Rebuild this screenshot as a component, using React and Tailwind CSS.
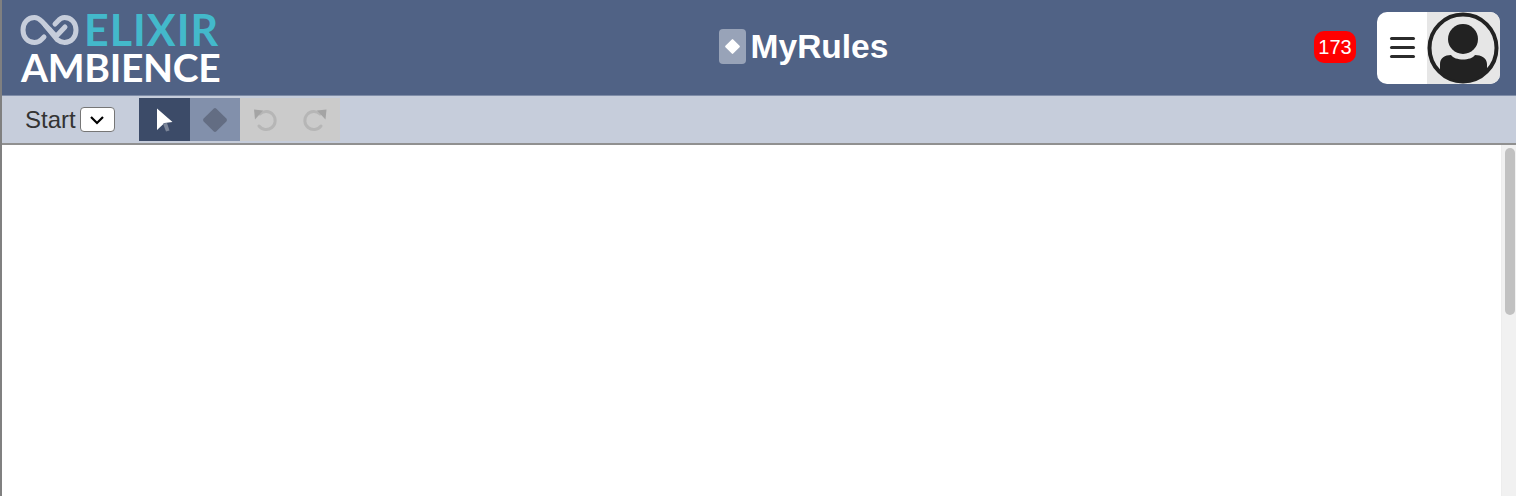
function Logo() {
  return (
    <div className="flex flex-col w-[200px] font-['Lato',sans-serif] font-bold">
      <div className="flex items-center h-[36px]">
        <svg width="62" height="38" viewBox="0 0 62 38" fill="none" className="shrink-0 -ml-[2px]">
          <path
            d="M31 19 L23 10.5 C20.5 8 18 6.5 15.5 6.5 C8.5 6.5 4 12 4 19 C4 26 8.5 31.5 15.5 31.5 C18 31.5 20.5 30.5 22.5 28.5 L25 26"
            stroke="#c6cddb"
            strokeWidth="5"
            strokeLinecap="round"
          />
          <path
            d="M31 19 L37 25.5 L46 16 M36 13 L38.5 10.5 C40.5 8 43 6.5 45.5 6.5 C52.5 6.5 57 12 57 19 C57 26 52.5 31.5 45.5 31.5 C43 31.5 40.5 30.5 38 28.5 L26 14"
            stroke="#c6cddb"
            strokeWidth="5"
            strokeLinecap="round"
            strokeLinejoin="round"
          />
        </svg>
        <span className="text-[#43b9cb] text-[43px] leading-[36px] tracking-[1px] ml-[3px] mt-[1px]">ELIXIR</span>
      </div>
      <span className="text-white text-[39px] leading-[34px] tracking-[-0.3px] mt-[2px]">AMBIENCE</span>
    </div>
  );
}

function Toolbar() {
  return (
    <div className="flex items-center h-[47px] bg-[#c6cddb]">
      <span className="ml-[23px] text-[24px] text-[#333] leading-none">Start</span>
      <button className="flex items-center justify-center ml-[4px] w-[35px] h-[25px] bg-white border border-[#767676] rounded-[4px]">
        <svg width="14" height="10" viewBox="0 0 14 10" fill="none">
          <path d="M1 2 L7 8 L13 2" stroke="#000" strokeWidth="2.2" />
        </svg>
      </button>
      <div className="flex ml-[24px] h-[43px]">
        <div className="flex items-center justify-center w-[51px] bg-[#3c4b68]">
          <svg width="20" height="26" viewBox="0 0 20 26">
            <path d="M3 1.5 L18.5 15 L10.5 16 L3 23 Z" fill="#fff" />
            <path d="M9 16.5 L13 16 L15.5 23.5 L12 24.5 Z" fill="#7c8699" />
          </svg>
        </div>
        <div className="flex items-center justify-center w-[50px] bg-[#8290ab]">
          <div className="w-[18px] h-[18px] rotate-45 rounded-[2px] bg-[#636d83]" />
        </div>
        <div className="flex items-center justify-center w-[50px] bg-[#cbcbcb]">
          <svg width="26" height="26" viewBox="0 0 26 26" fill="none">
            <path d="M8 7 A9 9 0 1 1 7 19" stroke="#b6b6b6" strokeWidth="3" strokeLinecap="round" />
            <path d="M2 2.5 L11 3.5 L3 12.5 Z" fill="#a4a4a4" />
          </svg>
        </div>
        <div className="flex items-center justify-center w-[50px] bg-[#cbcbcb]">
          <svg width="26" height="26" viewBox="0 0 26 26" fill="none">
            <path d="M18 7 A9 9 0 1 0 19 19" stroke="#b6b6b6" strokeWidth="3" strokeLinecap="round" />
            <path d="M24.5 2.5 L15 3.5 L23.5 12.5 Z" fill="#a4a4a4" />
          </svg>
        </div>
      </div>
    </div>
  );
}

export default function App() {
  return (
    <div className="flex flex-col h-[496px] overflow-hidden border-l-2 border-[#808080] bg-white font-['Liberation_Sans',Arial,sans-serif]">
      {/* Cabeçalho */}
      <div className="flex items-center justify-between h-[96px] pl-[19px] pr-[16px] bg-[#506285] border-b border-[#7f8da8]">
        <Logo />
        <div className="flex items-center ml-[72px]">
          <div className="flex items-center justify-center w-[27px] h-[35px] mb-[2px] rounded-[4px] bg-[#98a3b8]">
            <div className="w-[11px] h-[11px] rotate-45 rounded-[1px] bg-white" />
          </div>
          <span className="ml-[5px] mb-[1px] text-white text-[33.5px] font-bold leading-none">MyRules</span>
        </div>
        <div className="flex items-center">
          <div className="flex items-center justify-center w-[42px] h-[32px] mb-[2px] rounded-[10px] bg-[#ff0000] text-white text-[20px]">173</div>
          <div className="flex ml-[21px] w-[123px] h-[72px] rounded-[10px] overflow-hidden bg-white">
            <div className="flex flex-col items-center justify-center gap-[5.5px] w-[50px] pl-[1px]">
              <div className="w-[25px] h-[3.5px] rounded-full bg-[#2b2b2b]" />
              <div className="w-[25px] h-[3.5px] rounded-full bg-[#2b2b2b]" />
              <div className="w-[25px] h-[3.5px] rounded-full bg-[#2b2b2b]" />
            </div>
            <div className="flex-1 flex items-center justify-center bg-[#e6e6e6]">
              <svg width="72" height="72" viewBox="0 0 72 72">
                <defs>
                  <clipPath id="avatarClip">
                    <circle cx="36" cy="36" r="33" />
                  </clipPath>
                </defs>
                <circle cx="36" cy="36" r="33.5" fill="none" stroke="#222" strokeWidth="4" />
                <circle cx="36" cy="27" r="15" fill="#222" />
                <path d="M13 72 L13 52 C13 46 18 43 24 43 C28 49 44 49 48 43 C54 43 60 46 60 52 L60 72 Z" fill="#222" clipPath="url(#avatarClip)" />
              </svg>
            </div>
          </div>
        </div>
      </div>

      <Toolbar />

      {/* Área de trabalho */}
      <div className="flex flex-1 justify-end border-t-2 border-[#909090]">
        <div className="w-[15px] bg-[#f1f1f1] border-l border-[#ededed] pt-[3px] pl-[3px]">
          <div className="w-[10px] h-[167px] rounded-full bg-[#c1c1c1]" />
        </div>
      </div>
    </div>
  );
}
